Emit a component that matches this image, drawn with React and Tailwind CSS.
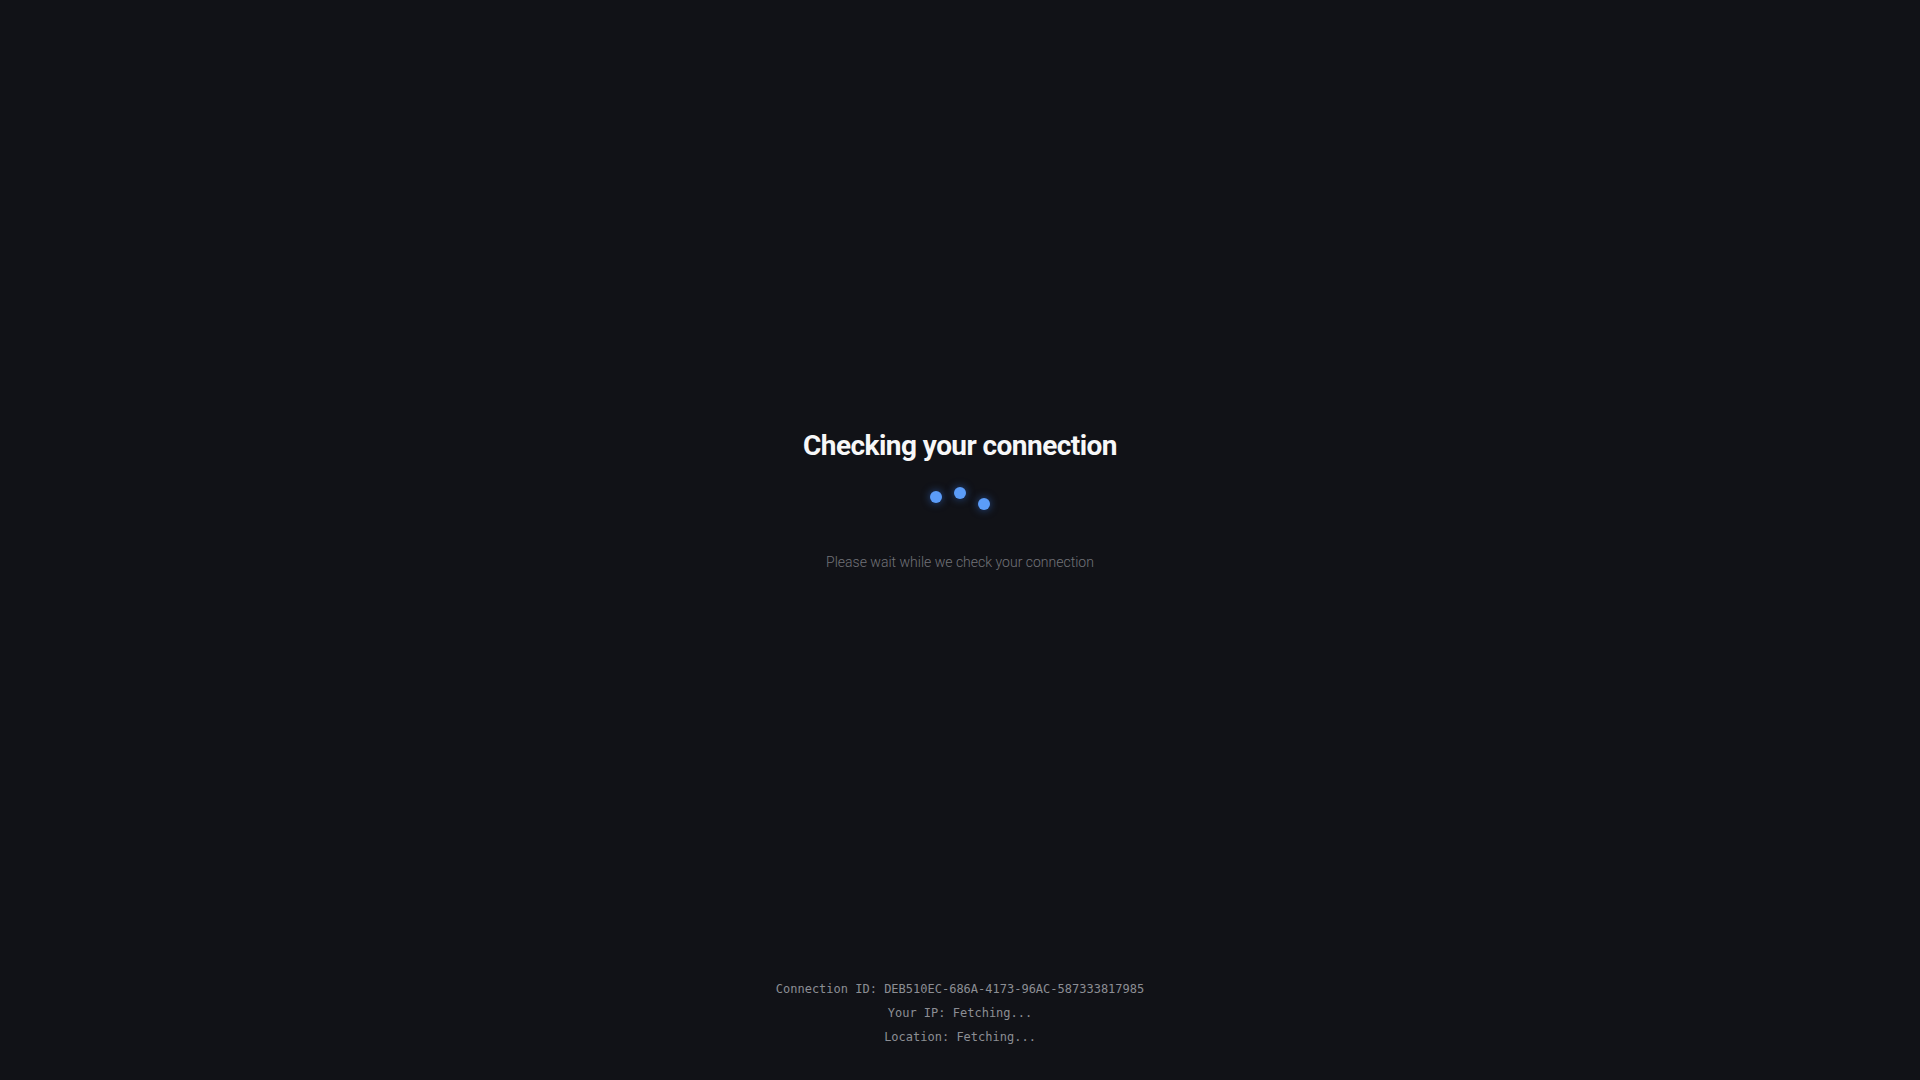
import React from 'react';

const connectionId = 'DEB510EC-686A-4173-96AC-587333817985';

function Dots() {
  // snapshot of the bouncing loader
  const offsets = ['mt-[4px]', 'mt-0', 'mt-[11px]'];
  return (
    <div className="flex items-start justify-center gap-3 h-[24px] mt-[23px]">
      {offsets.map((m, i) => (
        <span
          key={i}
          className={`${m} block w-3 h-3 rounded-full bg-[#5b9cf8] shadow-[0_0_8px_rgba(59,130,246,0.55)]`}
        />
      ))}
    </div>
  );
}

export default function App() {
  return (
    <div className="min-h-screen h-screen flex flex-col bg-[#111217] font-['Roboto',sans-serif]">
      {/* Main */}
      <div className="flex-1 flex items-center justify-center pt-[22px]">
        <div className="flex flex-col items-center">
          <h1 className="text-[28px] leading-[36px] font-bold tracking-[-0.02em] text-[#f7f7f8]">Checking your connection</h1>
          <Dots />
          <p className="mt-[41px] text-sm leading-5 font-light text-[#717379]">
            Please wait while we check your connection
          </p>
        </div>
      </div>

      {/* Footer */}
      <div className="pb-[31px] text-center font-['DejaVu_Sans_Mono',monospace] text-xs leading-6 text-[#8c8e94]">
        <div>Connection ID: {connectionId}</div>
        <div>Your IP: Fetching...</div>
        <div>Location: Fetching...</div>
      </div>
    </div>
  );
}
